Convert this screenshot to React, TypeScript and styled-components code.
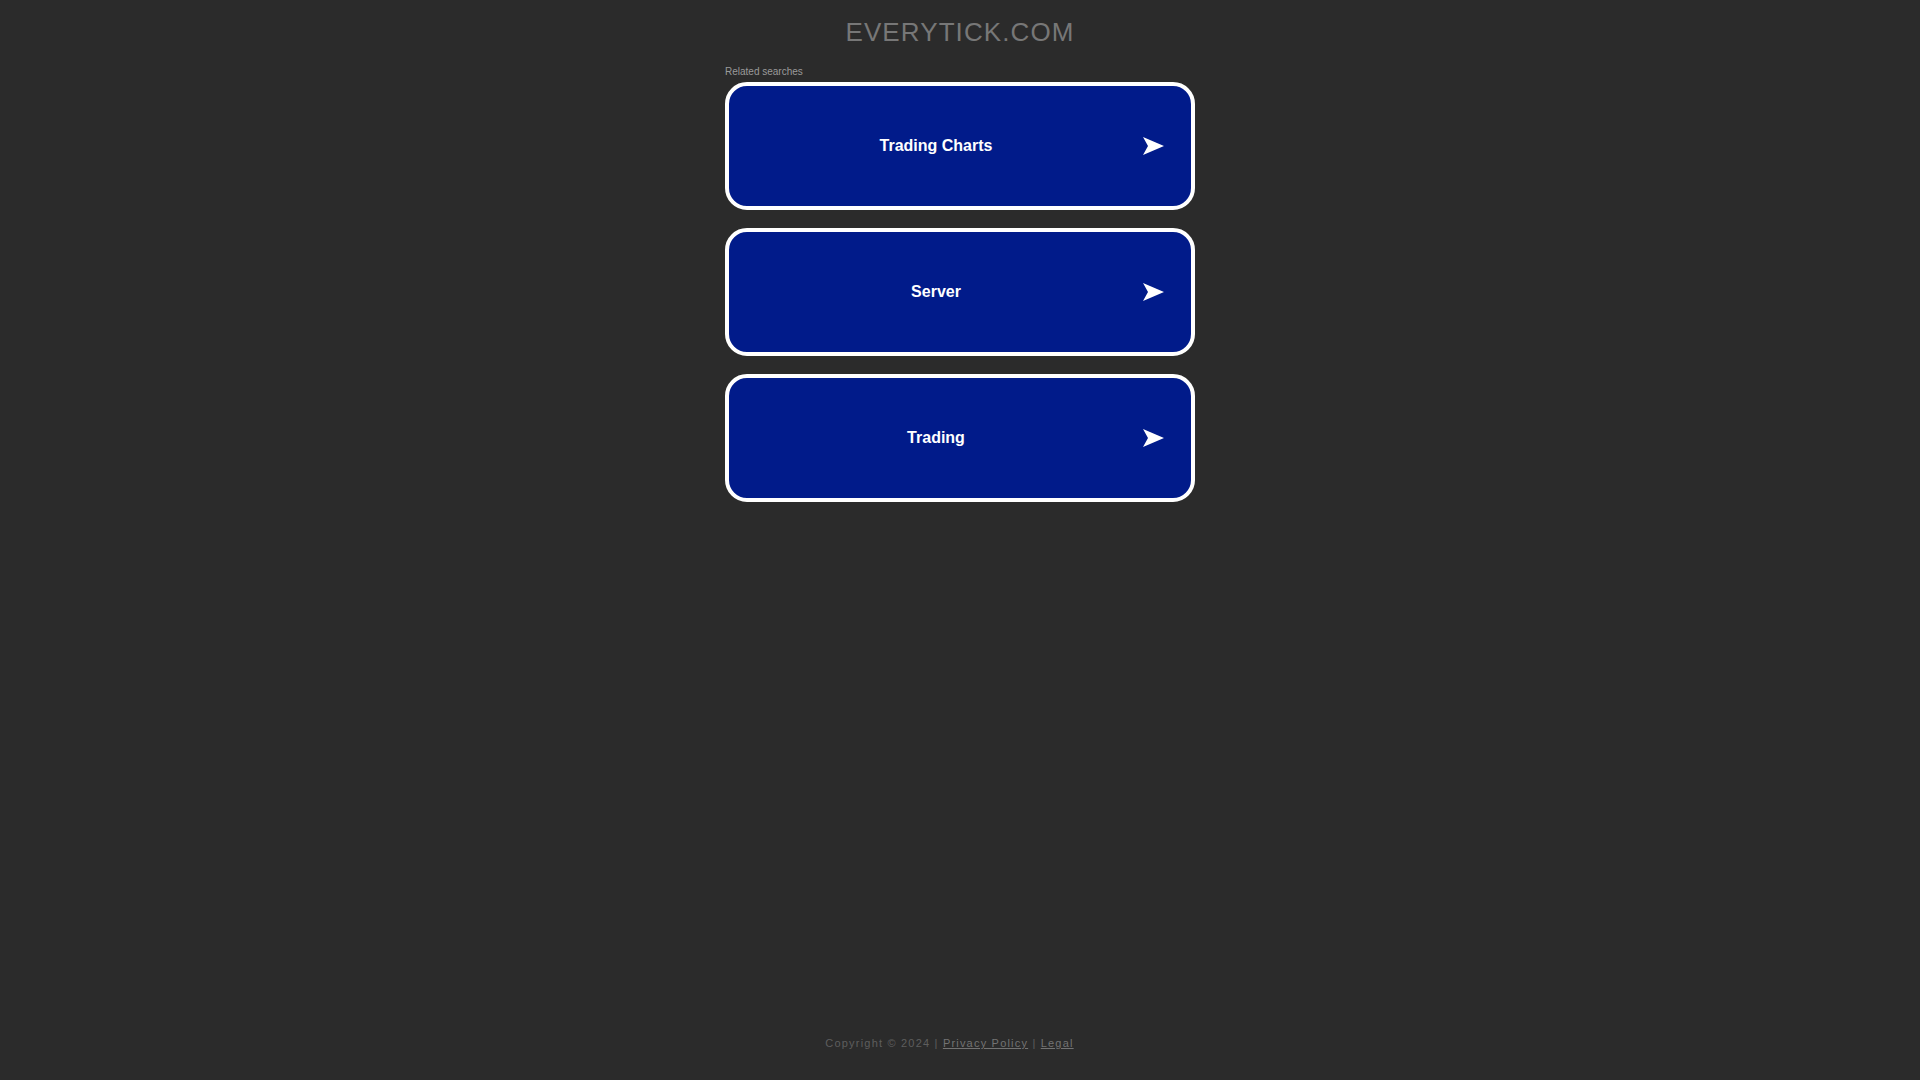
import styled, { createGlobalStyle } from "styled-components";

const GlobalStyle = createGlobalStyle`
  html, body {
    margin: 0;
    padding: 0;
    background-color: #2b2b2b;
    font-family: "Liberation Sans", Arial, sans-serif;
  }
`;

const Page = styled.div`
  min-height: 100vh;
  display: flex;
  flex-direction: column;
  align-items: center;
  box-sizing: border-box;
  padding-top: 17px;
  padding-bottom: 30px;
`;

const Title = styled.h1`
  margin: 0;
  font-size: 26px;
  font-weight: normal;
  letter-spacing: 1.1px;
  color: #777777;
  line-height: 30px;
`;

const Related = styled.div`
  width: 470px;
  margin-top: 19px;
`;

const RelatedLabel = styled.div`
  font-size: 10px;
  line-height: 12px;
  color: #9a9a9a;
  margin-bottom: 4px;
`;

const List = styled.div`
  display: flex;
  flex-direction: column;
  gap: 18px;
`;

const Card = styled.a`
  display: flex;
  align-items: center;
  height: 128px;
  box-sizing: border-box;
  border: 4px solid #ffffff;
  border-radius: 22px;
  background-color: #011b8a;
  padding-right: 27px;
  text-decoration: none;
  cursor: pointer;
`;

const CardText = styled.span`
  flex: 1;
  text-align: center;
  color: #ffffff;
  font-size: 16px;
  font-weight: bold;
`;

const Arrow = styled.svg`
  width: 21px;
  height: 18px;
  display: block;
`;

const Footer = styled.div`
  margin-top: auto;
  padding-right: 21px;
  font-size: 11px;
  letter-spacing: 1.2px;
  color: #5e5e5e;
  line-height: 13px;
`;

const FooterLink = styled.a`
  color: #737373;
  text-decoration: underline;
`;

const searches = ["Trading Charts", "Server", "Trading"];

function App() {
  return (
    <>
      <GlobalStyle />
      <Page>
        <Title>EVERYTICK.COM</Title>
        <Related>
          <RelatedLabel>Related searches</RelatedLabel>
          <List>
            {searches.map((s) => (
              <Card key={s}>
                <CardText>{s}</CardText>
                <Arrow viewBox="0 0 21 18">
                  <path d="M0 0 L21 9 L0 18 L5 9 Z" fill="#ffffff" />
                </Arrow>
              </Card>
            ))}
          </List>
        </Related>
        <Footer>
          Copyright © 2024 | <FooterLink>Privacy Policy</FooterLink> |{" "}
          <FooterLink>Legal</FooterLink>
        </Footer>
      </Page>
    </>
  );
}

export default App;
